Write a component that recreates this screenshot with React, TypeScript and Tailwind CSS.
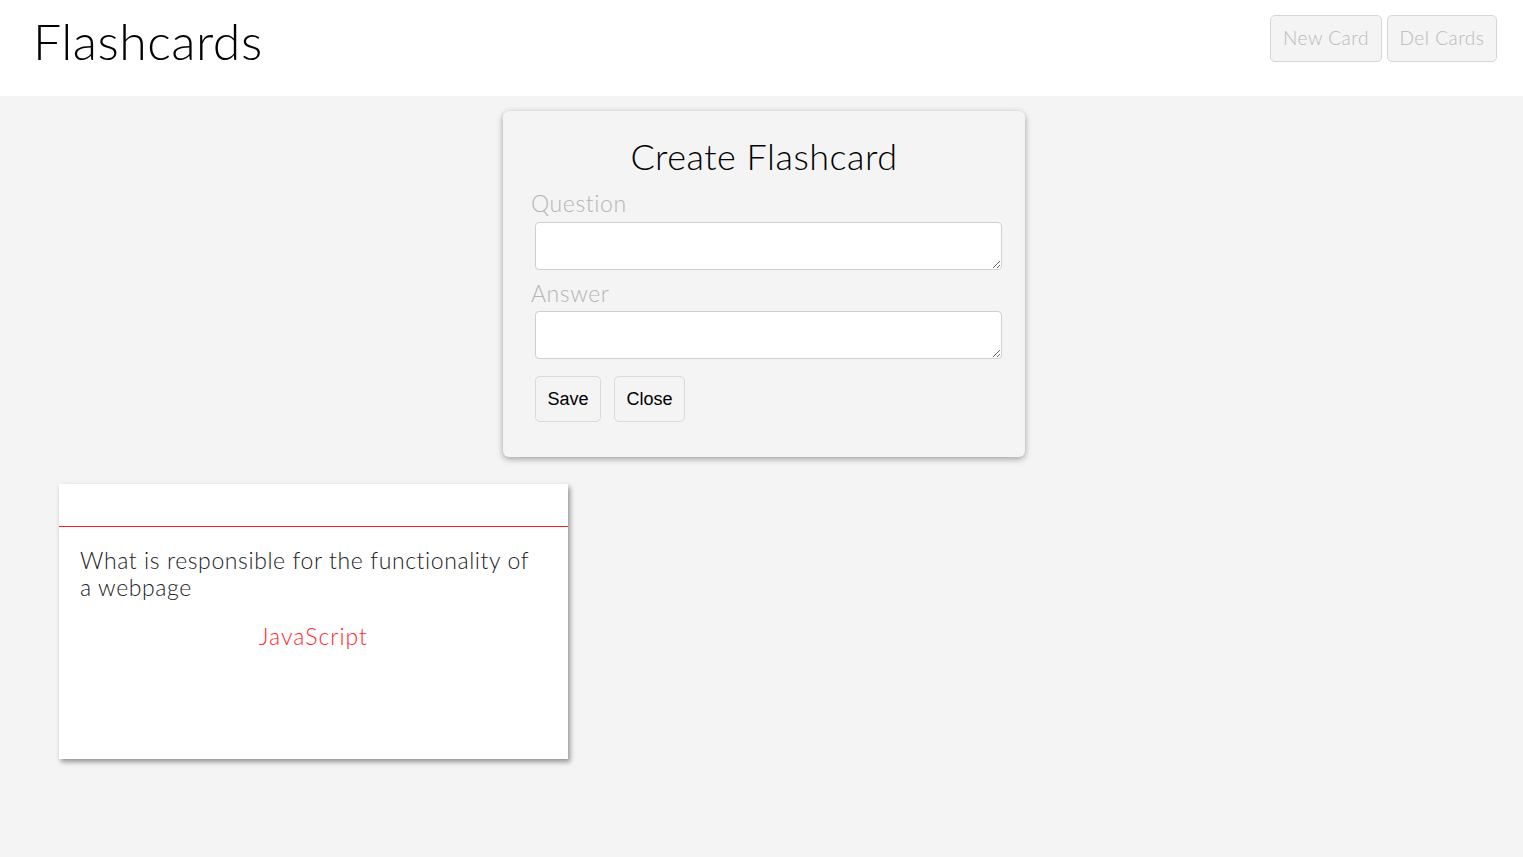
const font = { fontFamily: "Lato, 'Noto Sans', sans-serif" };

const App = () => {
  return (
    <div
      className="flex min-h-[857px] flex-col bg-[#f4f4f4] text-black"
      style={font}
    >
      <header className="flex h-[96px] items-start justify-between bg-white pl-[33px] pr-[26px]">
        <h1 className="mt-[12px] text-[50px] font-light leading-[58px] tracking-[0.5px]">
          Flashcards
        </h1>
        <div className="mt-[15px] flex gap-[5px]">
          <button className="h-[47px] w-[112px] rounded-[5px] border border-[#d6d6d6] bg-[#f4f4f4] text-[19px] font-light tracking-[0.5px] text-[#b9b9b9]">
            New Card
          </button>
          <button className="h-[47px] w-[110px] rounded-[5px] border border-[#d6d6d6] bg-[#f4f4f4] text-[19px] font-light tracking-[0.5px] text-[#b9b9b9]">
            Del Cards
          </button>
        </div>
      </header>

      <main className="flex flex-col px-[59px]">
        <div className="ml-[444px] mt-[15px] w-[522px] rounded-[6px] bg-[#f4f4f4] px-[28px] pb-[35px] pt-[22px] shadow-[0_2px_6px_rgba(0,0,0,0.35)]">
          <h2 className="text-center text-[36px] font-light leading-[46px] tracking-[0.5px]">
            Create Flashcard
          </h2>
          <label className="mt-[10px] block text-[23px] font-light leading-[28px] tracking-[0.6px] text-[#b4b4b4]">
            Question
          </label>
          <textarea className="mt-[5px] ml-[4px] block h-[48px] w-[467px] rounded-[4px] border border-[#cfcfcf] bg-white" />
          <label className="mt-[9px] block text-[23px] font-light leading-[28px] tracking-[0.6px] text-[#b4b4b4]">
            Answer
          </label>
          <textarea className="mt-[4px] ml-[4px] block h-[48px] w-[467px] rounded-[4px] border border-[#cfcfcf] bg-white" />
          <div
            className="ml-[4px] mt-[17px] flex gap-[13px]"
            style={{ fontFamily: "'Liberation Sans', Arial, sans-serif" }}
          >
            <button className="h-[46px] w-[66px] rounded-[5px] border border-[#d9d9d9] bg-[#f4f4f4] text-[18px]">
              Save
            </button>
            <button className="h-[46px] w-[71px] rounded-[5px] border border-[#d9d9d9] bg-[#f4f4f4] text-[18px]">
              Close
            </button>
          </div>
        </div>

        <div className="mt-[27px] h-[275px] w-[509px] bg-white shadow-[2px_3px_5px_rgba(0,0,0,0.4)]">
          <div className="h-[42px]" />
          <div className="h-px bg-[#ff2020]" />
          <p className="px-[21px] pt-[20px] text-[23px] font-light leading-[27px] tracking-[0.6px] text-[#222]">
            What is responsible for the functionality of a webpage
          </p>
          <p className="mt-[22px] text-center text-[23px] font-light leading-[27px] tracking-[1px] text-[#ff2a2a]">
            JavaScript
          </p>
        </div>
      </main>
    </div>
  );
};

export default App;
